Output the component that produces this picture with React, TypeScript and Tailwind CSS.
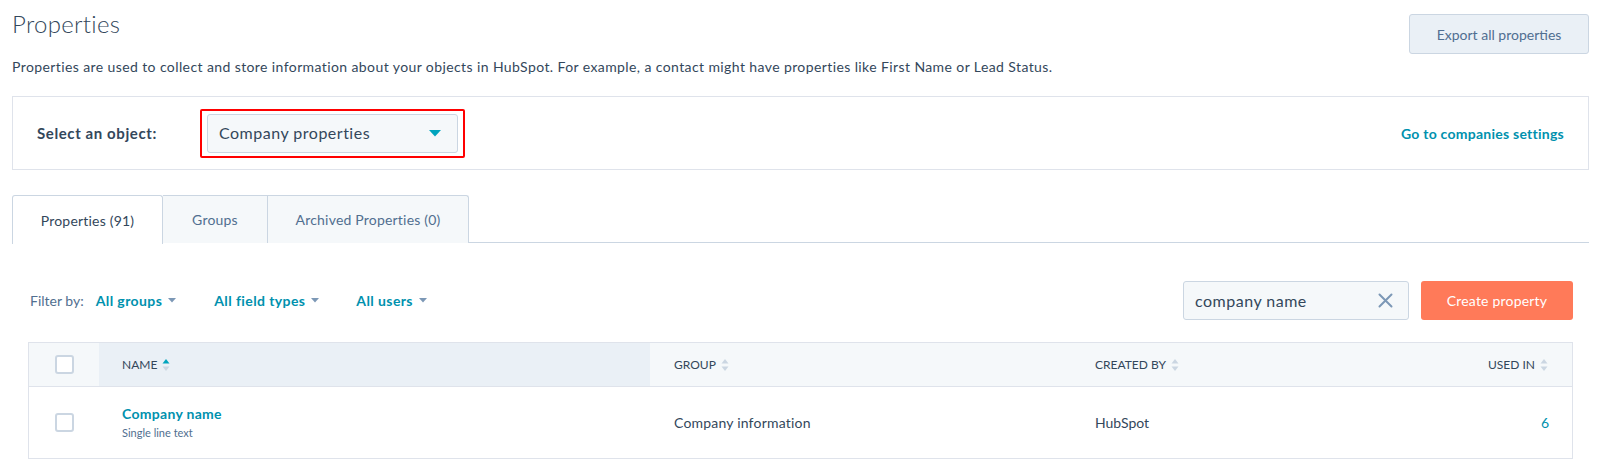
const FONT = "font-['Lato','Noto_Sans',sans-serif]"

function SortArrows({ active = false }: { active?: boolean }) {
  return (
    <svg width="8" height="14" viewBox="0 0 8 14" className="ml-[5px] inline-block">
      <path d="M4 1 L7.5 5.5 L0.5 5.5 Z" fill={active ? "#00a4bd" : "#cbd6e2"} />
      <path d="M4 13 L7.5 8.5 L0.5 8.5 Z" fill="#cbd6e2" />
    </svg>
  )
}

function Caret({ color = "#7c98b6" }: { color?: string }) {
  return (
    <svg width="8" height="5" viewBox="0 0 8 5" className="ml-[6px] inline-block">
      <path d="M0 0 L8 0 L4 4.5 Z" fill={color} />
    </svg>
  )
}

function Checkbox() {
  return <div className="w-[19px] h-[19px] rounded-[3px] border-2 border-[#cbd6e2] bg-white" />
}

export default function App() {
  return (
    <div className={`${FONT} w-[1600px] h-[467px] overflow-hidden bg-white text-[#33475b]`}>
      {/* page header */}
      <div className="flex justify-between pl-[12px] pr-[11px]">
        <div className="pt-[8px]">
          <h1 className="text-[24px] leading-[32px] font-light tracking-[0.3px]">Properties</h1>
          <p className="mt-[17px] text-[14px] leading-[20px] tracking-[0.4px]">
            Properties are used to collect and store information about your objects in HubSpot. For example, a contact might have properties like First Name or Lead Status.
          </p>
        </div>
        <button className="mt-[14px] w-[180px] h-[40px] rounded-[3px] border border-[#cbd6e2] bg-[#eaf0f6] text-[14px] text-[#506e91]">
          Export all properties
        </button>
      </div>

      {/* object selector */}
      <div className="mr-[11px] ml-[12px] mt-[19px] h-[74px] border border-[#dfe3eb] flex items-center justify-between pl-[24px] pr-[24px]">
        <div className="flex items-center">
          <span className="text-[15px] font-bold tracking-[0.6px] w-[163px]">Select an object:</span>
          <div className="border-2 border-[#ff0000] rounded-[2px] px-[5px] py-[3px]">
            <div className="w-[251px] h-[39px] rounded-[3px] border border-[#cbd6e2] bg-[#f5f8fa] flex items-center justify-between pl-[11px] pr-[16px]">
              <span className="text-[16px] tracking-[0.5px] text-[#33475b]">Company properties</span>
              <svg width="12" height="7" viewBox="0 0 12 7">
                <path d="M0 0 L12 0 L6 6.5 Z" fill="#00a4bd" />
              </svg>
            </div>
          </div>
        </div>
        <span className="text-[14px] font-bold tracking-[0.25px] text-[#0091ae]">Go to companies settings</span>
      </div>

      {/* tabs */}
      <div className="ml-[12px] mr-[11px] mt-[25px] flex border-b border-[#cbd6e2] h-[48px]">
        <div className="w-[151px] h-[49px] flex items-center justify-center rounded-t-[3px] border border-b-0 border-[#cbd6e2] bg-white text-[14px] tracking-[0.2px] text-[#33475b] relative z-10">
          Properties (91)
        </div>
        <div className="w-[105px] h-[48px] flex items-center justify-center border-t border-r border-[#cbd6e2] bg-[#f5f8fa] text-[14px] tracking-[0.2px] text-[#516f90]">
          Groups
        </div>
        <div className="w-[201px] h-[48px] flex items-center justify-center rounded-tr-[3px] border-t border-r border-[#cbd6e2] bg-[#f5f8fa] text-[14px] tracking-[0.2px] text-[#516f90]">
          Archived Properties (0)
        </div>
      </div>

      {/* filters */}
      <div className="ml-[30px] mr-[27px] mt-[38px] flex items-center justify-between">
        <div className="flex items-center text-[14px]">
          <span className="text-[#516f90]">Filter by:</span>
          <span className="ml-[12px] font-bold tracking-[0.4px] text-[#0091ae] flex items-center">All groups<Caret /></span>
          <span className="ml-[38px] font-bold tracking-[0.4px] text-[#0091ae] flex items-center">All field types<Caret /></span>
          <span className="ml-[37px] font-bold tracking-[0.4px] text-[#0091ae] flex items-center">All users<Caret /></span>
        </div>
        <div className="flex items-center gap-[12px]">
          <div className="w-[226px] h-[39px] rounded-[3px] border border-[#cbd6e2] bg-[#f5f8fa] flex items-center justify-between pl-[11px] pr-[15px]">
            <span className="text-[16px] tracking-[0.5px] text-[#33475b]">company name</span>
            <svg width="15" height="15" viewBox="0 0 15 15">
              <path d="M1.5 1.5 L13.5 13.5 M13.5 1.5 L1.5 13.5" stroke="#7c98b6" strokeWidth="2" strokeLinecap="round" />
            </svg>
          </div>
          <button className="w-[152px] h-[39px] rounded-[3px] bg-[#ff7a59] text-white text-[14px] tracking-[0.2px]">
            Create property
          </button>
        </div>
      </div>

      {/* table */}
      <div className="ml-[28px] mr-[27px] mt-[22px] border border-[#dfe3eb]">
        <div className="flex h-[44px] border-b border-[#dfe3eb] bg-[#f5f8fa] text-[12px] uppercase text-[#33475b]">
          <div className="w-[70px] flex items-center justify-center"><Checkbox /></div>
          <div className="w-[551px] bg-[#eaf0f6] flex items-center pl-[23px]">Name<SortArrows active /></div>
          <div className="w-[421px] flex items-center pl-[24px]">Group<SortArrows /></div>
          <div className="flex-1 flex items-center pl-[24px]">Created by<SortArrows /></div>
          <div className="w-[200px] flex items-center justify-end pr-[24px]">Used in<SortArrows /></div>
        </div>
        <div className="flex h-[71px] text-[14px]">
          <div className="w-[70px] flex items-center justify-center"><Checkbox /></div>
          <div className="w-[551px] flex flex-col justify-center pl-[23px]">
            <span className="font-bold tracking-[0.3px] text-[#0091ae] leading-[18px]">Company name</span>
            <span className="text-[11px] text-[#516f90] leading-[16px] mt-[2px]">Single line text</span>
          </div>
          <div className="w-[421px] flex items-center pl-[24px] tracking-[0.2px]">Company information</div>
          <div className="flex-1 flex items-center pl-[24px]">HubSpot</div>
          <div className="w-[200px] flex items-center justify-end pr-[23px] text-[#0091ae]">6</div>
        </div>
      </div>
    </div>
  )
}
